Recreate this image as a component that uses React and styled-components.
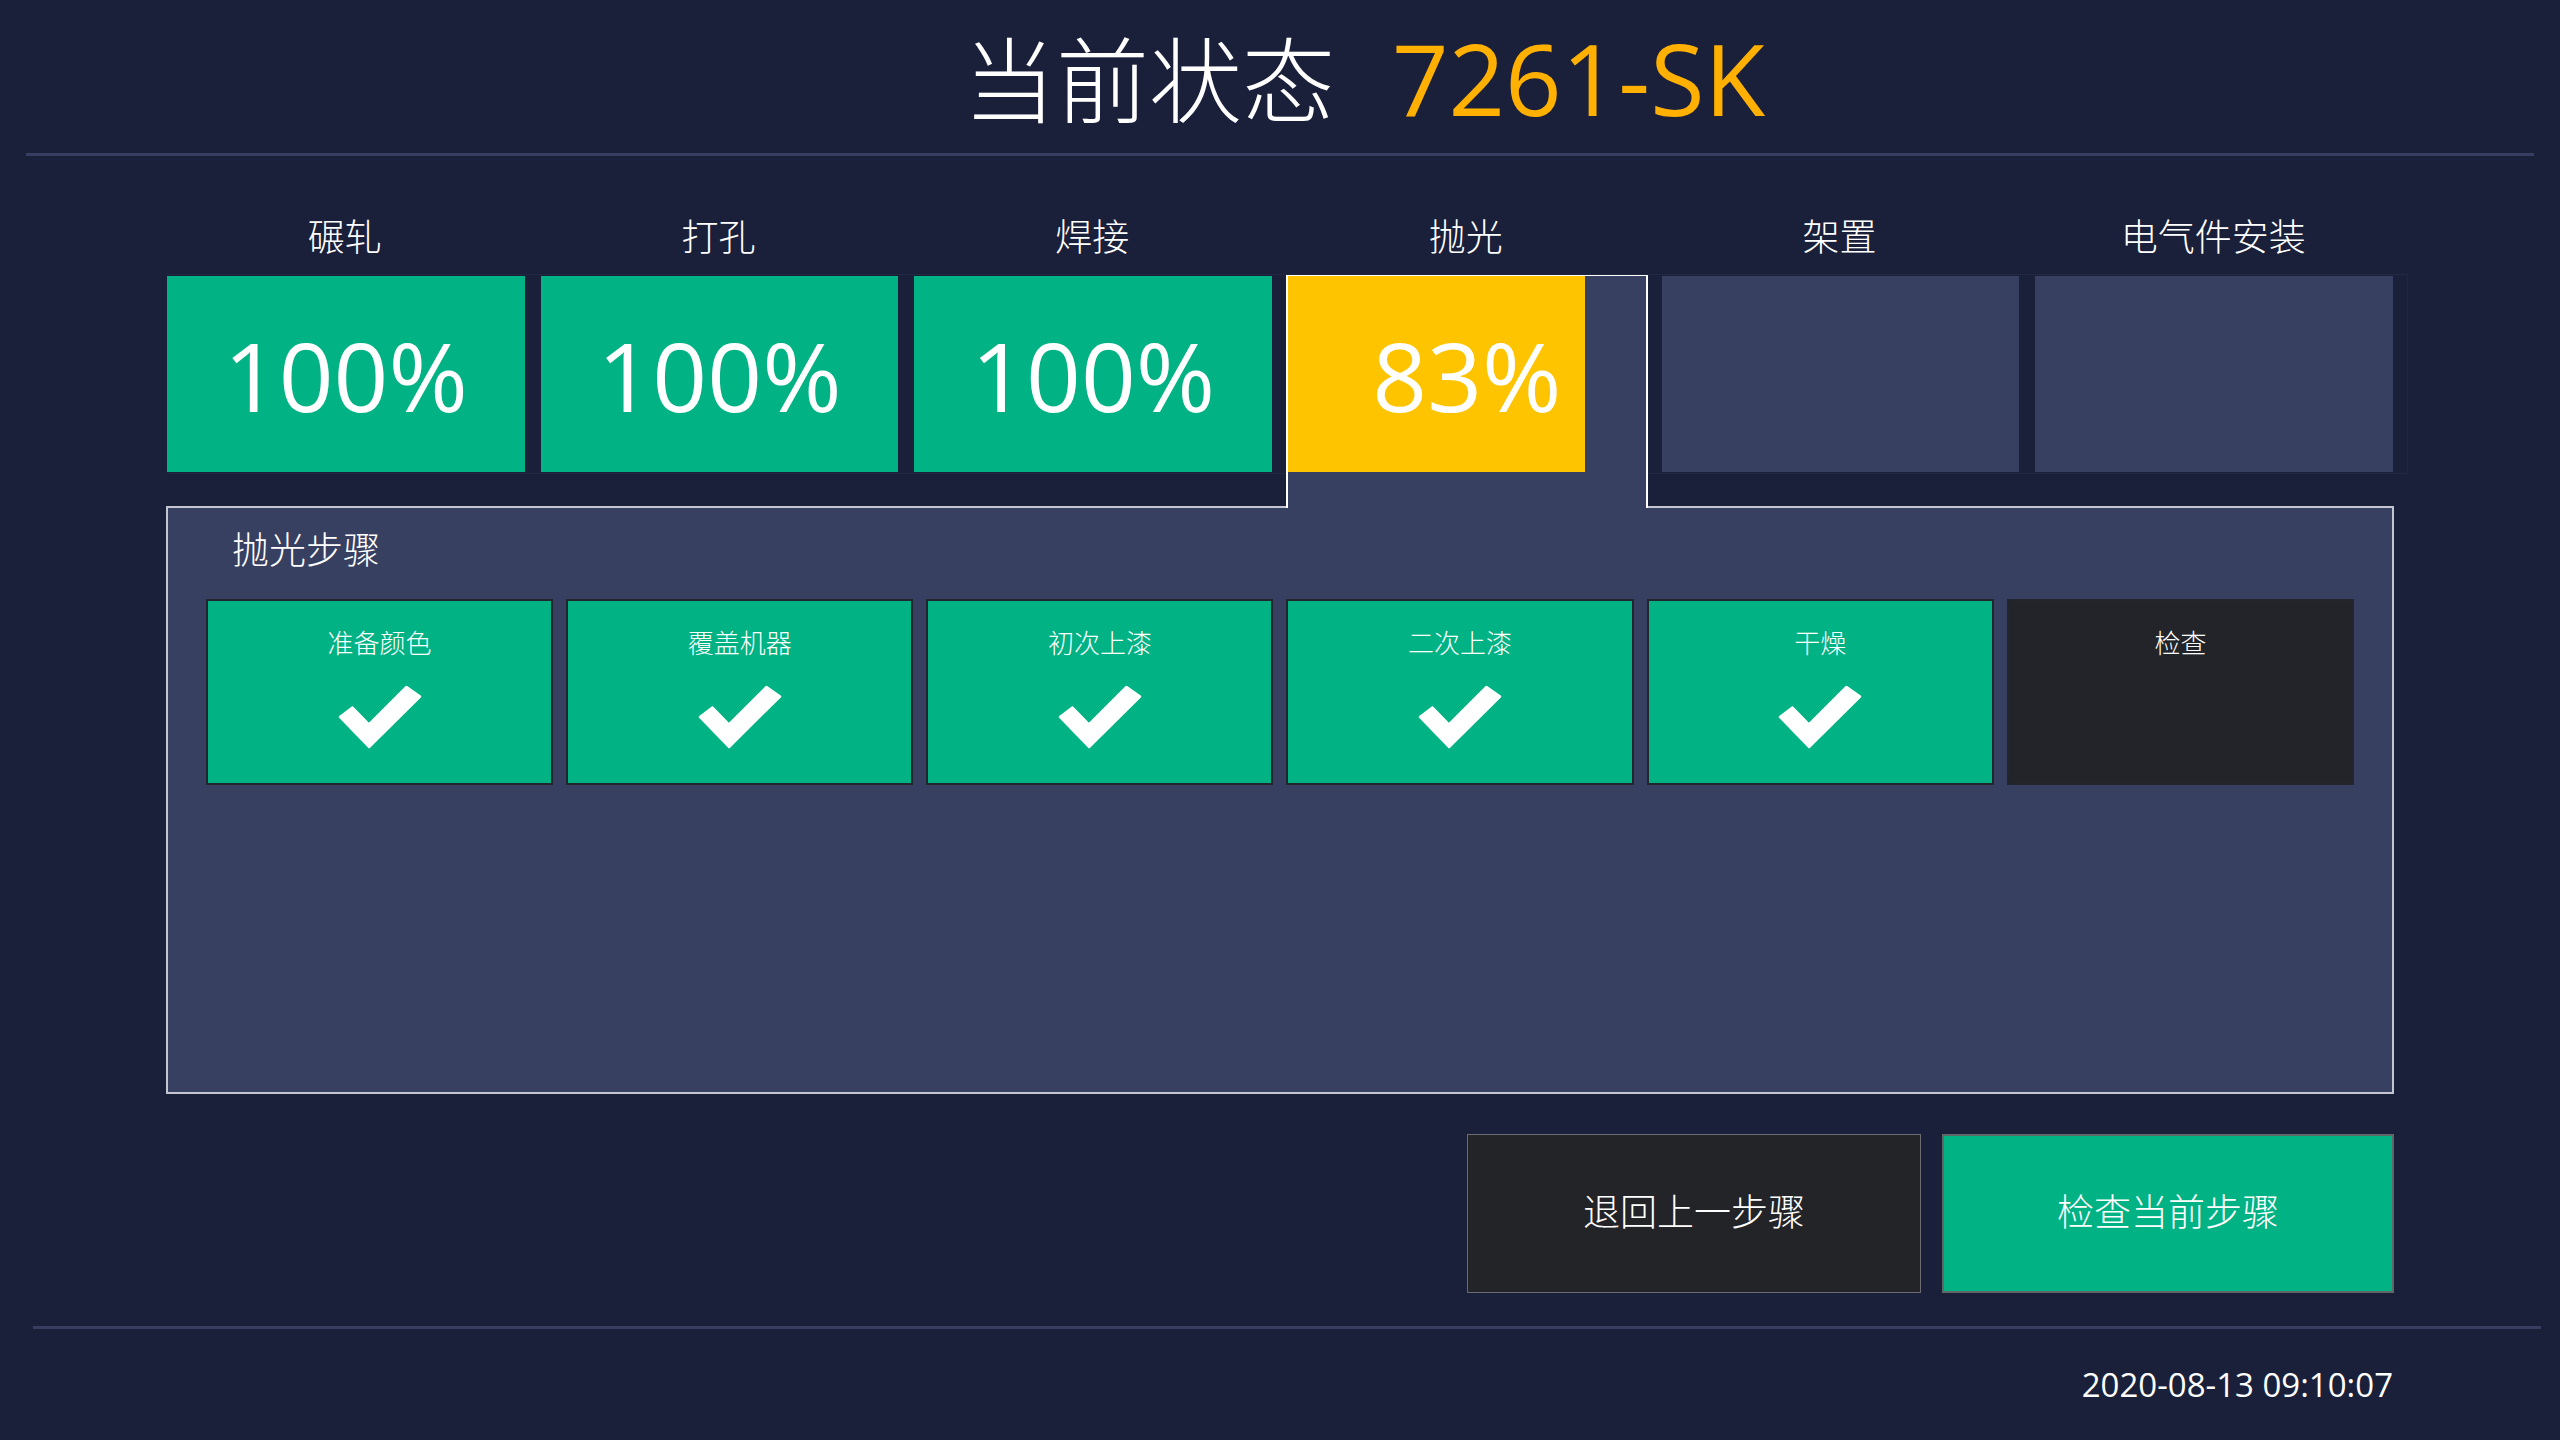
import React from "react";
import styled, { createGlobalStyle } from "styled-components";

const CJK = `"Noto Sans CJK SC", "Noto Sans", sans-serif`;
const LATIN = `"Open Sans", "Noto Sans", sans-serif`;

const C = {
  bg: "#1a203a",
  rule: "#373e60",
  panel: "#384062",
  green: "#00b284",
  yellow: "#ffc400",
  orange: "#ffb000",
  dark: "#232429",
  panelBorder: "#c3c6d0",
};

const GlobalStyle = createGlobalStyle`
  html, body { margin: 0; padding: 0; background: ${C.bg}; }
  body { font-family: ${CJK}; color: #fff; }
  * { box-sizing: border-box; }
`;

const Page = styled.div`
  width: 2560px;
  height: 1440px;
  overflow: hidden;
  background: ${C.bg};
  display: flex;
  flex-direction: column;
`;

const Header = styled.header`
  height: 153px;
  padding-top: 16px;
  padding-left: 168px;
  display: flex;
  justify-content: center;
  align-items: flex-start;
`;

const Title = styled.h1`
  margin: 0;
  display: flex;
  align-items: baseline;
  gap: 57px;
  line-height: 120px;
  font-weight: 400;
`;

const TitleText = styled.span`
  font-family: ${CJK};
  font-size: 93px;
  font-weight: 300;
  color: #fff;
`;

const TitleCode = styled.span`
  font-family: ${LATIN};
  font-size: 99px;
  color: ${C.orange};
`;

const Rule = styled.div`
  height: 3px;
  background: ${C.rule};
  margin: ${(p) => p.$margin};
`;

const Content = styled.main`
  padding-left: 166px;
  display: flex;
  flex-direction: column;
`;

const StageLabels = styled.div`
  width: 2226px;
  margin-top: 57px;
  display: grid;
  grid-template-columns: repeat(6, 1fr);
  gap: 16px;
`;

const StageLabel = styled.div`
  font-family: ${CJK};
  font-size: 37px;
  font-weight: 300;
  line-height: 44px;
  text-align: center;
  color: #fff;
`;

const StageRow = styled.div`
  width: 2242px;
  margin-top: 17px;
  padding: 1px 14px 1px 0;
  border: 1px solid #20273f;
  border-left-color: transparent;
  display: grid;
  grid-template-columns: repeat(6, 1fr);
  gap: 16px;
  align-items: start;
`;

const Cell = styled.div`
  height: 196px;
  display: flex;
  align-items: center;
  justify-content: center;
  font-family: ${LATIN};
  font-size: 96px;
  color: #fff;
  background-color: ${C.panel};
  background-repeat: no-repeat;
`;

const ActiveTab = styled.div`
  position: relative;
  z-index: 1;
  height: 233px;
  margin: -1px -2px -36px;
  border: 2px solid #fff;
  border-top-width: 1px;
  border-bottom: none;
  background: ${C.panel};
`;

const Panel = styled.section`
  width: 2228px;
  height: 588px;
  margin-top: 32px;
  border: 2px solid ${C.panelBorder};
  background: ${C.panel};
  padding: 18px 38px 21px;
  display: flex;
  flex-direction: column;
`;

const PanelTitle = styled.h2`
  margin: 0;
  padding-left: 26px;
  font-family: ${CJK};
  font-size: 37px;
  line-height: 44px;
  font-weight: 300;
  color: #fff;
`;

const StepGrid = styled.div`
  margin-top: 29px;
  display: grid;
  grid-template-columns: repeat(6, 1fr);
  gap: 13px;
`;

const StepCard = styled.div`
  height: 186px;
  border: 2px solid #24262d;
  background: ${(p) => (p.$done ? C.green : C.dark)};
  padding-top: 24px;
  display: flex;
  flex-direction: column;
  align-items: center;
`;

const StepName = styled.div`
  font-family: ${CJK};
  font-size: 26px;
  font-weight: 300;
  line-height: 34px;
  color: #fff;
`;

const CheckIcon = styled.svg`
  margin-top: 26px;
  width: 84px;
  height: 64px;
  display: block;
`;

const Actions = styled.div`
  width: 2228px;
  margin-top: 40px;
  display: flex;
  justify-content: flex-end;
  gap: 21px;
`;

const ActionButton = styled.button`
  width: ${(p) => (p.$primary ? "452px" : "454px")};
  height: 159px;
  border: ${(p) => (p.$primary ? "2px solid #5f6767" : "1px solid #6b6c71")};
  background: ${(p) => (p.$primary ? C.green : "#232428")};
  color: #fff;
  font-family: ${CJK};
  font-size: 37px;
  font-weight: 300;
  padding: 0 0 8px;
  cursor: pointer;
`;

const DateLine = styled.div`
  margin-top: 36px;
  padding-right: 167px;
  text-align: right;
  font-family: ${LATIN};
  font-size: 33px;
  line-height: 40px;
  color: #fff;
`;

const stages = [
  { name: "碾轧", progress: 100 },
  { name: "打孔", progress: 100 },
  { name: "焊接", progress: 100 },
  { name: "抛光", progress: 83, active: true },
  { name: "架置", progress: null },
  { name: "电气件安装", progress: null },
];

const steps = [
  { name: "准备颜色", done: true },
  { name: "覆盖机器", done: true },
  { name: "初次上漆", done: true },
  { name: "二次上漆", done: true },
  { name: "干燥", done: true },
  { name: "检查", done: false },
];

function Check() {
  return (
    <CheckIcon viewBox="0 0 84 64">
      <polygon
        points="2,32 14.5,22.5 31,39.5 68.5,2 82,11.5 31,62"
        fill="#fff"
        stroke="#fff"
        strokeWidth="2.5"
        strokeLinejoin="round"
      />
    </CheckIcon>
  );
}

function ProgressCell({ stage }) {
  const color = stage.progress === 100 ? C.green : C.yellow;
  const style =
    stage.progress != null
      ? {
          backgroundImage: `linear-gradient(to right, ${color} ${stage.progress}%, transparent ${stage.progress}%)`,
        }
      : undefined;
  return <Cell style={style}>{stage.progress != null ? `${stage.progress}%` : ""}</Cell>;
}

export default function App() {
  return (
    <>
      <GlobalStyle />
      <Page>
        <Header>
          <Title>
            <TitleText>当前状态</TitleText>
            <TitleCode>7261-SK</TitleCode>
          </Title>
        </Header>
        <Rule $margin="0 26px" />
        <Content>
          <StageLabels>
            {stages.map((s) => (
              <StageLabel key={s.name}>{s.name}</StageLabel>
            ))}
          </StageLabels>
          <StageRow>
            {stages.map((s) =>
              s.active ? (
                <ActiveTab key={s.name}>
                  <ProgressCell stage={s} />
                </ActiveTab>
              ) : (
                <ProgressCell key={s.name} stage={s} />
              )
            )}
          </StageRow>
          <Panel>
            <PanelTitle>抛光步骤</PanelTitle>
            <StepGrid>
              {steps.map((st) => (
                <StepCard key={st.name} $done={st.done}>
                  <StepName>{st.name}</StepName>
                  {st.done && <Check />}
                </StepCard>
              ))}
            </StepGrid>
          </Panel>
          <Actions>
            <ActionButton>退回上一步骤</ActionButton>
            <ActionButton $primary>检查当前步骤</ActionButton>
          </Actions>
        </Content>
        <Rule $margin="33px 19px 0 33px" />
        <DateLine>2020-08-13 09:10:07</DateLine>
      </Page>
    </>
  );
}
